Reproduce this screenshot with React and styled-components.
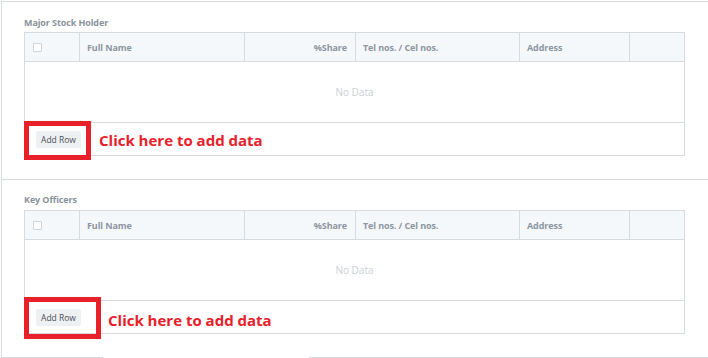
import React from "react";
import styled, { createGlobalStyle } from "styled-components";

const Global = createGlobalStyle`
  html, body { margin: 0; padding: 0; background: #fff; }
  body { font-family: "Open Sans", "Noto Sans", Arial, sans-serif; }
  #root { padding: 1px 0 0 1px; }
`;

const Section = styled.section`
  position: relative;
  height: 177px;
  border-top: 1px solid #d6dbe0;
  border-left: 1px solid #d6dbe0;
  border-bottom: ${(p) => (p.$last ? "1px solid #d6dbe0" : "none")};
  padding: 0 23px 0 22px;
  box-sizing: content-box;
`;

const Title = styled.div`
  height: 30px;
  padding-top: ${(p) => p.$pt}px;
  box-sizing: border-box;
  font-size: 9px;
  font-weight: 700;
  color: #8a929b;
  line-height: 12px;
  letter-spacing: -0.1px;
`;

const Table = styled.div`
  border: 1px solid #d6dbe0;
  display: grid;
  grid-template-columns: 55px 165px 111px 164px 110px 54px;
`;

const Head = styled.div`
  height: 28px;
  background: #f5f8fb;
  border-bottom: 1px solid #d6dbe0;
  border-right: ${(p) => (p.$last ? "none" : "1px solid #d6dbe0")};
  display: flex;
  align-items: center;
  justify-content: ${(p) => (p.$right ? "flex-end" : "flex-start")};
  padding: 0 8px 0 7px;
  font-size: 9px;
  font-weight: 700;
  color: #8d96a0;
  letter-spacing: -0.1px;
`;

const Check = styled.span`
  width: 7px;
  height: 7px;
  border: 1px solid #cfd5dc;
  border-radius: 1px;
  background: #fff;
  margin-left: 1px;
`;

const Empty = styled.div`
  grid-column: 1 / -1;
  height: 60px;
  border-bottom: 1px solid #d6dbe0;
  display: flex;
  align-items: center;
  justify-content: center;
  font-size: 10px;
  color: #c9cfd6;
`;

const Footer = styled.div`
  grid-column: 1 / -1;
  height: 32px;
  position: relative;
  display: flex;
  align-items: center;
  padding-left: 11px;
`;

const AddRow = styled.button`
  width: 45px;
  height: 17px;
  border: none;
  border-radius: 2px;
  background: #eef1f4;
  color: #4a4f55;
  font-family: "Open Sans", Arial, sans-serif;
  font-size: 8.5px;
  padding: 0;
  margin-top: ${(p) => p.$mt}px;
`;

const RedBox = styled.div`
  position: absolute;
  left: -1px;
  top: ${(p) => p.$top}px;
  width: ${(p) => p.$w}px;
  height: ${(p) => p.$h}px;
  border: 5px solid #e8202a;
  box-sizing: border-box;
`;

const Callout = styled.div`
  position: absolute;
  left: ${(p) => p.$left}px;
  top: ${(p) => p.$top}px;
  font-size: 15px;
  font-weight: 700;
  color: #e8202a;
  white-space: nowrap;
  line-height: 20px;
`;

const Mask = styled.div`
  position: absolute;
  left: 101px;
  bottom: -1px;
  width: 206px;
  height: 2px;
  background: #fff;
`;

const cols = [
  { label: "", check: true },
  { label: "Full Name" },
  { label: "%Share", right: true },
  { label: "Tel nos. / Cel nos." },
  { label: "Address" },
  { label: "", last: true },
];

function Grid({ box, callout, btnMt }) {
  return (
    <Table>
      {cols.map((c, i) => (
        <Head key={i} $right={c.right} $last={c.last}>
          {c.check ? <Check /> : c.label}
        </Head>
      ))}
      <Empty>No Data</Empty>
      <Footer>
        <AddRow $mt={btnMt}>Add Row</AddRow>
        <RedBox $top={box.top} $w={box.w} $h={box.h} />
        <Callout $left={callout.left} $top={callout.top}>
          Click here to add data
        </Callout>
      </Footer>
    </Table>
  );
}

export default function App() {
  return (
    <>
      <Global />
      <Section>
        <Title $pt={15}>Major Stock Holder</Title>
        <Grid
          btnMt={1}
          box={{ top: -2, w: 67, h: 39 }}
          callout={{ left: 74, top: 7 }}
        />
      </Section>
      <Section $last>
        <Title $pt={14}>Key Officers</Title>
        <Grid
          btnMt={1}
          box={{ top: -4, w: 77, h: 42 }}
          callout={{ left: 83, top: 9 }}
        />
        <Mask />
      </Section>
    </>
  );
}
